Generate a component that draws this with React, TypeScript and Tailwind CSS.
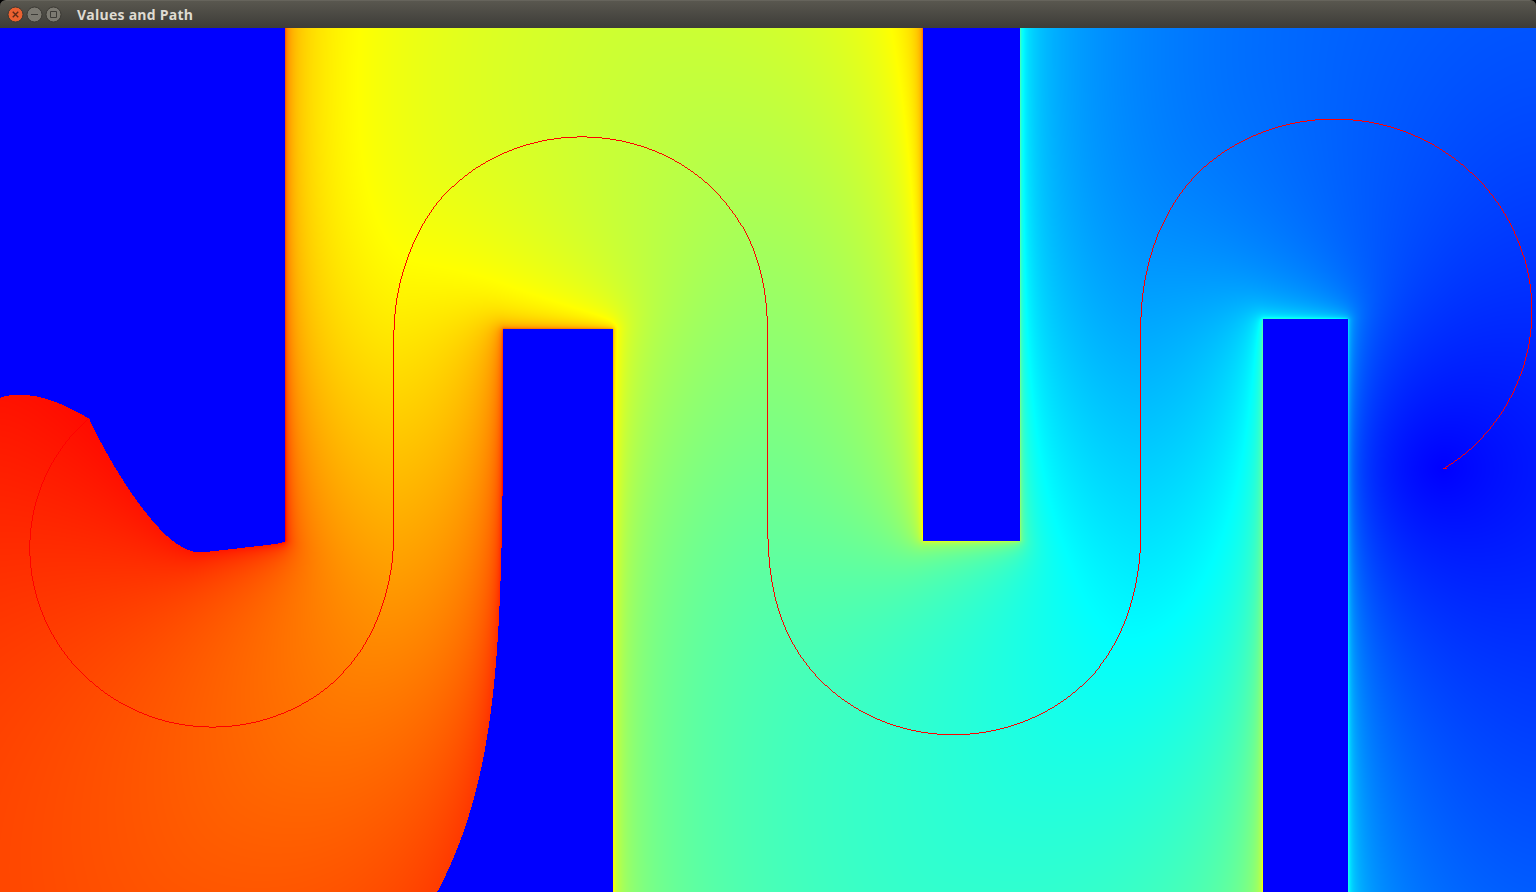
import { useLayoutEffect, useRef } from "react";

const W = 1536;
const H = 864;
const N = W * H;
const WALLS = [
  [203, 0, 285, 513],
  [503, 301, 613, 864],
  [923, 0, 1020, 513],
  [1263, 291, 1348, 864],
];
const GOAL = [1443, 440];
const START = [88, 391];
// Top of the colour scale, relative to the cost at the start.
const HEADROOM = 1.014;

// First-order fast marching on the pixel grid. Cells in `seeds` start at zero
// and cells with zero speed are never reached.
function march(seeds: number[], speed: Float64Array | null) {
  const t = new Float64Array(N).fill(Infinity);
  const done = new Uint8Array(N);
  const heap = new Int32Array(N + 1);
  const pos = new Int32Array(N).fill(-1);
  let size = 0;
  const up = (from: number) => {
    let k = from;
    const c = heap[k];
    while (k > 0) {
      const p = (k - 1) >> 1;
      if (t[heap[p]] <= t[c]) break;
      heap[k] = heap[p];
      pos[heap[k]] = k;
      k = p;
    }
    heap[k] = c;
    pos[c] = k;
  };
  const pop = () => {
    const top = heap[0];
    const c = heap[--size];
    let k = 0;
    for (;;) {
      let m = 2 * k + 1;
      if (m >= size) break;
      if (m + 1 < size && t[heap[m + 1]] < t[heap[m]]) m++;
      if (t[heap[m]] >= t[c]) break;
      heap[k] = heap[m];
      pos[heap[k]] = k;
      k = m;
    }
    heap[k] = c;
    pos[c] = k;
    return top;
  };
  const relax = (i: number, j: number) => {
    if (i < 0 || j < 0 || i >= W || j >= H) return;
    const c = j * W + i;
    if (done[c] || (speed && speed[c] <= 0)) return;
    const a = Math.min(i > 0 ? t[c - 1] : Infinity, i < W - 1 ? t[c + 1] : Infinity);
    const b = Math.min(j > 0 ? t[c - W] : Infinity, j < H - 1 ? t[c + W] : Infinity);
    const f = speed ? 1 / speed[c] : 1;
    const v =
      Math.abs(a - b) >= f
        ? Math.min(a, b) + f
        : (a + b + Math.sqrt(2 * f * f - (a - b) * (a - b))) / 2;
    if (v < t[c]) {
      t[c] = v;
      if (pos[c] < 0) {
        heap[size] = c;
        pos[c] = size++;
      }
      up(pos[c]);
    }
  };
  for (const s of seeds) {
    t[s] = 0;
    done[s] = 1;
  }
  const spread = (c: number) => {
    const i = c % W;
    const j = (c - i) / W;
    relax(i - 1, j);
    relax(i + 1, j);
    relax(i, j - 1);
    relax(i, j + 1);
  };
  for (const s of seeds) spread(s);
  while (size > 0) {
    const c = pop();
    done[c] = 1;
    spread(c);
  }
  return t;
}

function wallCells() {
  const cells: number[] = [];
  for (const [x0, y0, x1, y1] of WALLS)
    for (let y = y0; y < y1; y++) for (let x = x0; x < x1; x++) cells.push(y * W + x);
  return cells;
}

// Steepest descent on the arrival times, from the start to the goal.
function tracePath(t: Float64Array, visit: (x: number, y: number) => void) {
  let x = START[0];
  let y = START[1];
  const gx = (i: number, j: number) => (t[j * W + i + 1] - t[j * W + i - 1]) / 2;
  const gy = (i: number, j: number) => (t[(j + 1) * W + i] - t[(j - 1) * W + i]) / 2;
  for (let s = 0; s < 20000; s++) {
    // The arcs over the upper corners run slightly tighter than the descent.
    const lift = 1.8 * Math.max(0, (280 - y) / 180);
    visit(Math.floor(x - (x > 1100 ? 0.6 : 0)), Math.floor(y + lift));
    if (Math.hypot(x - GOAL[0], y - GOAL[1]) < 3) break;
    const i = Math.min(W - 3, Math.max(1, Math.floor(x)));
    const j = Math.min(H - 3, Math.max(1, Math.floor(y)));
    const fx = x - i;
    const fy = y - j;
    const mix = (g: (i: number, j: number) => number) =>
      (g(i, j) * (1 - fx) + g(i + 1, j) * fx) * (1 - fy) +
      (g(i, j + 1) * (1 - fx) + g(i + 1, j + 1) * fx) * fy;
    const dx = mix(gx);
    const dy = mix(gy);
    const len = Math.max(Math.abs(dx), Math.abs(dy)) || 1;
    x -= dx / len;
    y -= dy / len;
  }
  for (let k = 0; k < 4; k++) visit(GOAL[0] + k, GOAL[1]);
}

function paint(canvas: HTMLCanvasElement) {
  const ctx = canvas.getContext("2d")!;
  const speed = march(wallCells(), null);
  let fastest = 0;
  for (let k = 0; k < N; k++) if (speed[k] > fastest) fastest = speed[k];
  const t = march([GOAL[1] * W + GOAL[0]], speed);
  const limit = t[START[1] * W + START[0]];
  const max = limit * HEADROOM;

  // A cell is settled when its estimated total stays within the start's cost.
  const settled = new Uint8Array(N);
  for (let y = 0; y < H; y++)
    for (let x = 0; x < W; x++) {
      const c = y * W + x;
      if (t[c] + Math.hypot(x - START[0], y - START[1]) / fastest <= limit) settled[c] = 1;
    }

  const img = ctx.createImageData(W, H);
  const px = img.data;
  for (let y = 0; y < H; y++)
    for (let x = 0; x < W; x++) {
      const c = y * W + x;
      const o = c * 4;
      px[o + 2] = 255;
      px[o + 3] = 255;
      if (t[c] === Infinity) continue;
      // The narrow band, one cell beyond the settled ones, also holds values.
      if (
        settled[c] ||
        (x > 0 && settled[c - 1]) ||
        (x < W - 1 && settled[c + 1]) ||
        (y > 0 && settled[c - W]) ||
        (y < H - 1 && settled[c + W])
      ) {
        const v = Math.min(3, (t[c] / max) * 3);
        px[o] = v < 1 ? 0 : Math.min(1, v - 1) * 255;
        px[o + 1] = v < 1 ? v * 255 : v < 2 ? 255 : (3 - v) * 255;
        px[o + 2] = v < 1 ? 255 : Math.max(0, 2 - v) * 255;
      }
    }
  tracePath(t, (x, y) => {
    const o = (y * W + x) * 4;
    px[o] = 255;
    px[o + 1] = 0;
    px[o + 2] = 0;
  });
  ctx.putImageData(img, 0, 0);
}

function ValueMap() {
  const ref = useRef<HTMLCanvasElement>(null);
  useLayoutEffect(() => {
    if (ref.current) paint(ref.current);
  }, []);
  return <canvas ref={ref} width={W} height={H} className="block" />;
}

export default function App() {
  return (
    <div className="flex h-[892px] w-[1536px] flex-col overflow-hidden bg-black">
      <header className="flex h-7 shrink-0 items-center rounded-t-md border-t border-[#66645c] bg-linear-to-b from-[#59574f] to-[#3d3c38] pl-[7px]">
        <div className="flex gap-[2px]">
          <svg width="17" height="17" viewBox="0 0 17 17" fill="none">
            <circle cx="8.5" cy="8.5" r="7.5" fill="#eb6130" stroke="#3a3833" />
            <path d="M5.75 5.75l5.5 5.5M11.25 5.75l-5.5 5.5" stroke="#5c2a17" strokeWidth="1.4" />
          </svg>
          <svg width="17" height="17" viewBox="0 0 17 17" fill="none">
            <circle cx="8.5" cy="8.5" r="7.5" fill="#7c7a72" stroke="#3a3833" />
            <path d="M5 8.5h7" stroke="#3c3b37" />
          </svg>
          <svg width="17" height="17" viewBox="0 0 17 17" fill="none">
            <circle cx="8.5" cy="8.5" r="7.5" fill="#7c7a72" stroke="#3a3833" />
            <path d="M5.5 5.5h6v6h-6z" stroke="#3c3b37" />
          </svg>
        </div>
        <h1 className="ml-[15px] font-['Open_Sans',sans-serif] text-[14px] font-bold leading-none tracking-[0.25px] text-[#dfdbd2]">
          Values and Path
        </h1>
      </header>
      <ValueMap />
    </div>
  );
}
